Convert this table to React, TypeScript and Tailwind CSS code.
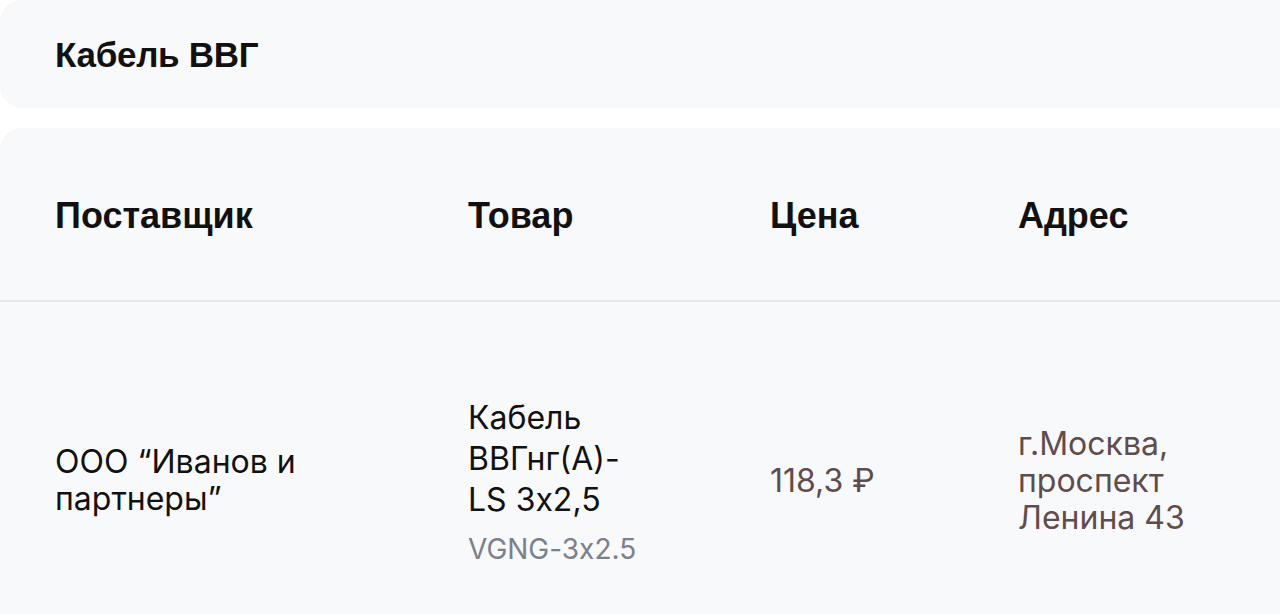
import React from "react";

interface Offer {
  supplier: string[];
  product: string[];
  sku: string;
  price: string;
  address: string[];
}

const offers: Offer[] = [
  {
    supplier: ["ООО “Иванов и", "партнеры”"],
    product: ["Кабель", "ВВГнг(А)-", "LS 3x2,5"],
    sku: "VGNG-3x2.5",
    price: "118,3 ₽",
    address: ["г.Москва,", "проспект", "Ленина 43"],
  },
];

const cols = "grid grid-cols-[413px_302px_248px_1fr]";

const App: React.FC = () => {
  return (
    <div className="h-[614px] w-[1280px] overflow-hidden bg-white font-['Inter',sans-serif] text-[#111] [font-feature-settings:'calt'_0]">
      <div className="flex h-[108px] items-center rounded-l-[22px] bg-[#f8f9fb] pl-[55px]">
        <h1 className="pt-[2px] font-['Liberation_Sans',sans-serif] text-[35px] font-bold tracking-[-0.3px]">
          Кабель ВВГ
        </h1>
      </div>

      <div className="mt-[20px] rounded-l-[22px] bg-[#f8f9fb]">
        <div
          className={`${cols} h-[174px] items-center border-b-2 border-[#e6e7ea] pl-[55px] pt-[4px] font-['Liberation_Sans',sans-serif] text-[36px] font-bold`}
        >
          <div>Поставщик</div>
          <div>Товар</div>
          <div>Цена</div>
          <div>Адрес</div>
        </div>

        {offers.map((offer, index) => (
          <div
            key={index}
            className={`${cols} h-[356px] items-center pl-[55px] text-[32px] leading-[37px]`}
          >
            <div>
              {offer.supplier.map((line, i) => (
                <div key={i} className="whitespace-nowrap">{line}</div>
              ))}
            </div>
            <div className="leading-[41px]">
              {offer.product.map((line, i) => (
                <div key={i} className="whitespace-nowrap">{line}</div>
              ))}
              <div className="mt-[14px] text-[28px] leading-[30px] text-[#7c808a]">
                {offer.sku}
              </div>
            </div>
            <div className="text-[#5f4c4c]">{offer.price}</div>
            <div className="text-[#5f4c4c]">
              {offer.address.map((line, i) => (
                <div key={i} className="whitespace-nowrap">{line}</div>
              ))}
            </div>
          </div>
        ))}
      </div>
    </div>
  );
};

export default App;
